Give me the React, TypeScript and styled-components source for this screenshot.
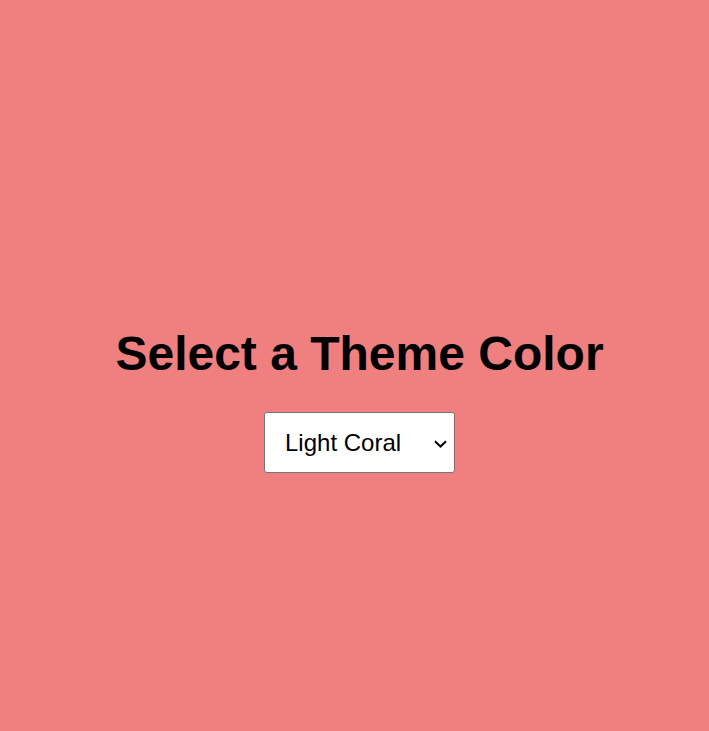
import React, { useState } from "react";
import styled, { createGlobalStyle } from "styled-components";

const GlobalStyle = createGlobalStyle`
  html, body {
    margin: 0;
    padding: 0;
  }
  body {
    font-family: "Liberation Sans", Arial, sans-serif;
  }
`;

const themes: Record<string, string> = {
  lightcoral: "Light Coral",
  lightblue: "Light Blue",
  lightgreen: "Light Green",
  lightsalmon: "Light Salmon",
  lightpink: "Light Pink",
};

const Page = styled.div<{ $bg: string }>`
  box-sizing: border-box;
  min-height: 100vh;
  padding: 68px 0 0 10px;
  display: flex;
  flex-direction: column;
  align-items: center;
  justify-content: center;
  background: ${(p) => p.$bg};
`;

const Title = styled.h1`
  margin: 0 0 31px;
  font-family: "Liberation Sans", Arial, sans-serif;
  font-size: 48px;
  font-weight: bold;
  color: #000;
`;

const SelectWrap = styled.div`
  position: relative;
  width: 191px;
  height: 61px;
`;

const Picker = styled.select`
  box-sizing: border-box;
  appearance: none;
  -webkit-appearance: none;
  width: 100%;
  height: 100%;
  margin: 0;
  padding: 0 30px 0 20px;
  font-family: "Liberation Sans", Arial, sans-serif;
  font-size: 24px;
  color: #000;
  background: #fff;
  border: 1px solid #767676;
  border-radius: 3px;
  outline: none;
`;

const Chevron = styled.svg`
  position: absolute;
  right: 8px;
  top: 50%;
  width: 13px;
  height: 8px;
  margin-top: -3px;
  pointer-events: none;
`;

export default function App() {
  const [theme, setTheme] = useState("lightcoral");
  return (
    <>
      <GlobalStyle />
      <Page $bg={theme}>
        <Title>Select a Theme Color</Title>
        <SelectWrap>
          <Picker value={theme} onChange={(e) => setTheme(e.target.value)}>
            {Object.entries(themes).map(([v, label]) => (
              <option key={v} value={v}>
                {label}
              </option>
            ))}
          </Picker>
          <Chevron viewBox="0 0 13 8" aria-hidden="true">
            <path d="M1 1.2 L6.5 6.5 L12 1.2" fill="none" stroke="#000" strokeWidth="2" />
          </Chevron>
        </SelectWrap>
      </Page>
    </>
  );
}
